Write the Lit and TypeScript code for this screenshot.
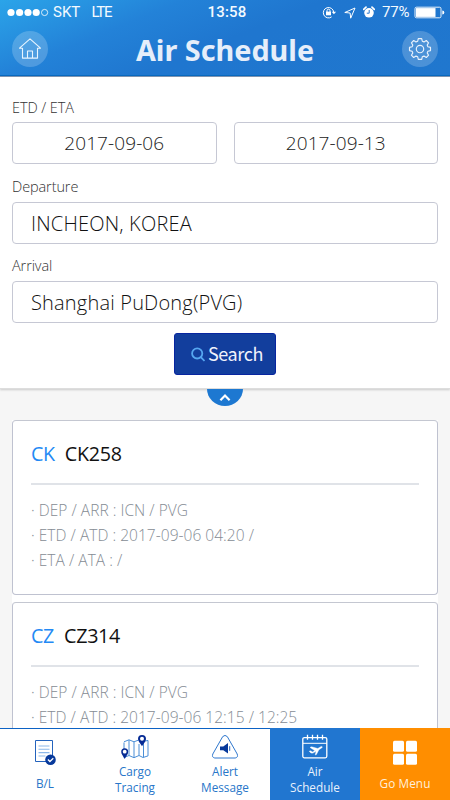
import { LitElement, html, css, svg } from "lit";
import { customElement, property } from "lit/decorators.js";

@customElement("status-bar")
class StatusBar extends LitElement {
  static styles = css`
    :host { display: flex; align-items: center; height: 25px; color: #f4faff;
      font: 15px/25px Roboto, "Liberation Sans", sans-serif; }
    .left, .right { display: flex; flex: 1; align-items: center; }
    .left { padding-left: 7px; }
    .right { justify-content: flex-end; padding-right: 5px; }
    .carrier { margin-left: 4px; width: 38.5px; letter-spacing: 0; }
    .net { letter-spacing: -1.2px; }
    .time { font-weight: 500; letter-spacing: 0.2px; width: 42px; text-align: center; margin-left: 2px; }
    .pct { margin-left: 7px; margin-right: 3px; font-size: 15px; width: 29px; letter-spacing: -0.2px; }
    .lock { margin-right: 7px; }
    .arrow { margin-right: 7px; }
    svg { display: block; }
  `;
  render() {
    return html`
      <div class="left">
        <svg width="42" height="9" viewBox="0 0 42 9">
          ${[4, 12.6, 21, 29.2].map((x) => svg`<circle cx=${x} cy="4.5" r="3.6" fill="#fff"/>`)}
          <circle cx="37.6" cy="4.5" r="3.1" fill="none" stroke="#fff" stroke-width=".8"/>
        </svg>
        <span class="carrier">SKT</span><span class="net">LTE</span>
      </div>
      <span class="time">13:58</span>
      <div class="right">
        <svg class="lock" width="15" height="13" viewBox="0 0 15 13" fill="none" stroke="#fff">
          <path d="M9.6 10.9A5.2 5.2 0 1 1 11.7 6.2"/>
          <path d="M9.7 5.7h4.4l-2.2 2.6z" fill="#fff" stroke="none"/>
          <rect x="4" y="5.6" width="5" height="3.7" fill="#fff" stroke="none"/>
          <path d="M5 6V4.7a1.5 1.5 0 0 1 3 0V6"/>
        </svg>
        <svg class="arrow" width="12" height="12" viewBox="0 0 12 12" fill="none" stroke="#fff" stroke-linejoin="round">
          <path d="M.8 5.5 11 1 6.7 11.2 6.1 6z"/>
        </svg>
        <svg width="12" height="13" viewBox="0 0 12 13">
          <circle cx="6" cy="6.8" r="4.8" fill="#fff"/>
          <path d="M.7 3.4 3 1.2M11.3 3.4 9 1.2" stroke="#fff" stroke-width="1.7" stroke-linecap="round"/>
          <path d="M6.2 4v3.2H3.8" fill="none" stroke="#2878d0"/>
        </svg>
        <span class="pct">77%</span>
        <svg width="31" height="13" viewBox="0 0 31 13">
          <rect x="1" y="1.2" width="26" height="10.6" rx="1.5" fill="none" stroke="#fff" stroke-width=".9"/>
          <rect x="2" y="2.1" width="19.5" height="8.8" fill="#fff"/>
          <path d="M28.3 4.5q2 .2 2 2t-2 2z" fill="#fff"/>
        </svg>
      </div>`;
  }
}

@customElement("flight-card")
class FlightCard extends LitElement {
  @property() airline = "";
  @property() flight = "";
  @property({ attribute: false }) lines: string[] = [];
  static styles = css`
    :host { display: block; box-sizing: border-box; height: 175px; padding: 0 18px;
      border: 1px solid #bfc2d0; border-top-color: #c4c7d1; border-radius: 4px; background: #fff;
      font-family: "Open Sans", "Noto Sans", sans-serif; }
    .title { display: flex; gap: 10px; height: 62px; line-height: 65px; font-size: 19.7px;
      letter-spacing: -0.3px; color: #111; border-bottom: 2px solid #e0e3e8; }
    .airline { color: #2389f4; }
    .line { height: 25px; line-height: 25px; font-size: 15.5px; font-weight: 300;
      color: #858c94; letter-spacing: 0.03px; white-space: pre; }
    .lines { padding-top: 13px; }
  `;
  render() {
    return html`
      <div class="title"><span class="airline">${this.airline}</span><span>${this.flight}</span></div>
      <div class="lines">${this.lines.map((l) => html`<div class="line">· ${l}</div>`)}</div>`;
  }
}

const billIcon = svg`<svg width="24" height="28" viewBox="0 0 24 28" fill="none">
  <path d="M2.500 1.500h17v21h-17z" stroke="#2463bd"/>
  <path d="M5.500 7h11M5.500 10.300h11M5.500 13.600h11M5.500 17h7" stroke="#8bb8ea" stroke-width="1.100"/>
  <circle cx="17.500" cy="20.700" r="5.300" fill="#07399b"/>
  <path d="m14.900 20.500 2 2 3.400-3.300" stroke="#fff" stroke-width="1.300"/>
</svg>`;

const cargoIcon = svg`<svg width="30" height="26" viewBox="0 0 30 26" fill="none">
  <path d="M4 8.500v15l5-2 5 2.200 5-2.200 4 2 5-1.600V6.400l-4.200 1M4 7.800l5-2 5 2 4.300-1.600M9 6v15.500M14 8v15.500M19 10v11.500M23.500 9v14.300" stroke="#4a8ed6"/>
  <path d="M22 12.300C20 9 18 7.200 18 5a4 4 0 0 1 8 0c0 2.200-2 4-4 7.300z" fill="#062b94"/>
  <path d="M4.700 25C3 22 1.200 20 1.200 17.800a3.500 3.500 0 0 1 7 0C8.200 20 6.400 22 4.700 25z" fill="#062b94"/>
  <circle cx="22" cy="4.800" r="2" fill="#fff"/><circle cx="4.700" cy="17.700" r="1.900" fill="#fff"/>
</svg>`;

const alertIcon = svg`<svg width="28" height="26" viewBox="0 0 28 26" fill="none">
  <path d="M11.700 2.600Q14 .2 16.300 2.600L26.200 20Q27.400 23.500 24.200 24H3.800Q.6 23.500 1.800 20z" stroke="#2e77ce"/>
  <path d="M9 12.600h3.300L17 9v10.600l-4.700-3.300H9z" fill="#07399b"/>
  <path d="M18.700 12.200v4.600" stroke="#2463bd"/>
</svg>`;

const airIcon = svg`<svg width="28" height="26" viewBox="0 0 28 26" fill="none" stroke="#fff">
  <rect x="1.800" y="3.600" width="24" height="20.200" rx="1.500" stroke-width="1.300"/>
  <path d="M2 9.300h24" />
  <path d="M6.500.8v5M11.500.8v5M16.500.8v5M21.500.8v5" stroke-width="1.300"/>
  <path d="m8.200 17.200 1.300-.4 2.200 1.100 2-1.300-4.700-3.200 1.600-.6 6.200 1.700 2.900-1.800c1.500-.8 2.200.3 1 1.200l-2.800 1.900-2.500 4.800-1.200.4.900-3.700-2.600 1.500c-1.800.8-3.100.2-4.300-1.600z" fill="#fff" stroke-width=".4"/>
</svg>`;

const menuIcon = svg`<svg width="26" height="26" viewBox="0 0 26 26" fill="#fff">
  <rect x="1" y=".7" width="11" height="11" rx="1.500"/><rect x="14" y=".7" width="11" height="11" rx="1.500"/>
  <rect x="1" y="13.700" width="11" height="11" rx="1.500"/><rect x="14" y="13.700" width="11" height="11" rx="1.500"/>
</svg>`;

@customElement("app-root")
class AppRoot extends LitElement {
  static styles = css`
    * { box-sizing: border-box; }
    svg { display: block; }
    :host { display: flex; flex-direction: column; width: 450px; height: 800px; overflow: hidden;
      background: #f6f6f6; font-family: "Open Sans", "Noto Sans", sans-serif; }
    header { flex: none; height: 77px; border-bottom: 1px solid #8095b3;
      background: linear-gradient(#0869be, #0869be) bottom / 100% 1px no-repeat,
        linear-gradient(158deg, #2ba4e9 0%, #2382d8 29%, #1f76cf 51%, #2077ce 100%); }
    .bar { display: flex; align-items: center; justify-content: space-between; height: 48px; padding: 0 12px; }
    h1 { margin: 0; padding-top: 1px; font: 700 28.8px/44px "Noto Sans", "Open Sans", sans-serif; color: #e6eefa; }
    .round { display: flex; align-items: center; justify-content: center; width: 36px; height: 36px;
      border-radius: 50%; background: rgba(255, 255, 255, 0.2); }
    .form { flex: none; height: 312px; padding: 17px 12px 0; background: #fff; border-bottom: 1px solid #ddd;
      box-shadow: 0 1px 2px rgba(0, 0, 0, 0.18); }
    label { display: block; height: 28px; line-height: 27px; font-size: 14.5px; font-weight: 300; color: #333; letter-spacing: -0.1px; }
    .row { display: flex; gap: 17px; }
    .field { flex: 1; height: 42px; border: 1px solid #c6c8d4; border-radius: 4px; padding-left: 18px;
      line-height: 41px; font-size: 20px; font-weight: 300; color: #111; letter-spacing: 0.18px; }
    .date { padding: 0; text-align: center; font-size: 19px; color: #222; letter-spacing: 0.1px; }
    .gap { height: 37.5px; padding-top: 8.5px; }
    .search { display: flex; align-items: center; width: 102px; height: 42px; margin: 10px auto 0; padding-left: 16px; gap: 3px;
      border: 1px solid #0725a0; border-radius: 3px; background: #123e9d; color: #f0f2fb;
      font: 18px/38px "Noto Sans CJK KR", "Noto Sans", sans-serif; letter-spacing: -0.4px; }
    .search span { height: 40px; }
    .toggle { flex: none; align-self: center; position: relative; width: 36px; height: 17px; background: #1d78d1;
      border-radius: 0 0 18px 18px / 0 0 17px 17px; padding: 4px 0 0 12px; }
    .list { flex: 1; overflow: hidden; padding: 14px 12px 0; }
    .cards { display: flex; flex-direction: column; gap: 7px; background: #fff; }
    nav { flex: none; display: flex; height: 72px; }
    .tab { display: flex; flex-direction: column; align-items: center; width: 90px; border-top: 1px solid #0c62c4;
      background: #fff; color: #2876c9; font-size: 11.75px; line-height: 16px; text-align: center; padding-top: 5px; gap: 3px; }
    .tab.single { padding-top: 10px; gap: 8px; }
    .tab.active { background: #2176d0; color: #e8f1fc; border-color: #2176d0; }
    .tab.menu { background: #ff8e00; color: #fff0dc; border-color: #ff8e00; padding-top: 11px; gap: 9px; }
    .tab.menu span { letter-spacing: 0.1px; }
  `;
  private flights = [
    { a: "CK", f: "CK258", l: ["DEP / ARR : ICN / PVG", "ETD / ATD : 2017-09-06 04:20 /", "ETA / ATA : /"] },
    { a: "CZ", f: "CZ314", l: ["DEP / ARR : ICN / PVG", "ETD / ATD : 2017-09-06 12:15 / 12:25"] },
  ];
  render() {
    return html`
      <header>
        <status-bar></status-bar>
        <div class="bar">
          <div class="round">
            <svg width="24" height="24" viewBox="0 0 24 24" fill="none" stroke="#e8f5ff" stroke-width="1.100" stroke-linejoin="round">
              <path d="M4.500 11.200H1.500L12 1.800l10.500 9.400h-3v9.900h-15z"/><path d="M9.500 21v-7h5v7"/>
            </svg>
          </div>
          <h1>Air Schedule</h1>
          <div class="round">
            <svg width="24" height="24" viewBox="0 0 24 24" fill="none" stroke="#e8f1fc" stroke-width="1.150" stroke-linejoin="round">
              <circle cx="12" cy="12" r="3.700"/>
              <path d="M10.300 1.600h3.400l.6 2.600 1.700.7 2.300-1.400 2.300 2.300-1.400 2.300.7 1.700 2.600.6v3.200l-2.600.6-.7 1.700 1.400 2.300-2.300 2.300-2.300-1.400-1.700.7-.6 2.600h-3.400l-.6-2.600-1.700-.7-2.300 1.400-2.300-2.300 1.400-2.300-.7-1.700-2.600-.6v-3.200l2.600-.6.7-1.700-1.400-2.300 2.300-2.300L8 4.900l1.700-.7z"/>
            </svg>
          </div>
        </div>
      </header>
      <section class="form">
        <label>ETD / ETA</label>
        <div class="row"><div class="field date">2017-09-06</div><div class="field date">2017-09-13</div></div>
        <label class="gap">Departure</label>
        <div class="field">INCHEON, KOREA</div>
        <label class="gap">Arrival</label>
        <div class="field">Shanghai PuDong(PVG)</div>
        <div class="search">
          <svg width="14" height="15" viewBox="0 0 14 15" fill="none" stroke="#56a7f1" stroke-width="1.800">
            <circle cx="6.200" cy="6.400" r="5.100"/><path d="m9.800 10.200 3.700 3.700"/>
          </svg>
          <span>Search</span>
        </div>
      </section>
      <div class="toggle">
        <svg width="12" height="9" viewBox="0 0 12 9" fill="none" stroke="#fff" stroke-width="2.200"><path d="m1.400 7.200 4.600-4.700 4.600 4.700"/></svg>
      </div>
      <div class="list"><div class="cards">
        ${this.flights.map((x) => html`<flight-card .airline=${x.a} .flight=${x.f} .lines=${x.l}></flight-card>`)}
      </div></div>
      <nav>
        <div class="tab single">${billIcon}<span>B/L</span></div>
        <div class="tab">${cargoIcon}<span>Cargo<br>Tracing</span></div>
        <div class="tab">${alertIcon}<span>Alert<br>Message</span></div>
        <div class="tab active">${airIcon}<span>Air<br>Schedule</span></div>
        <div class="tab menu">${menuIcon}<span>Go Menu</span></div>
      </nav>`;
  }
}
